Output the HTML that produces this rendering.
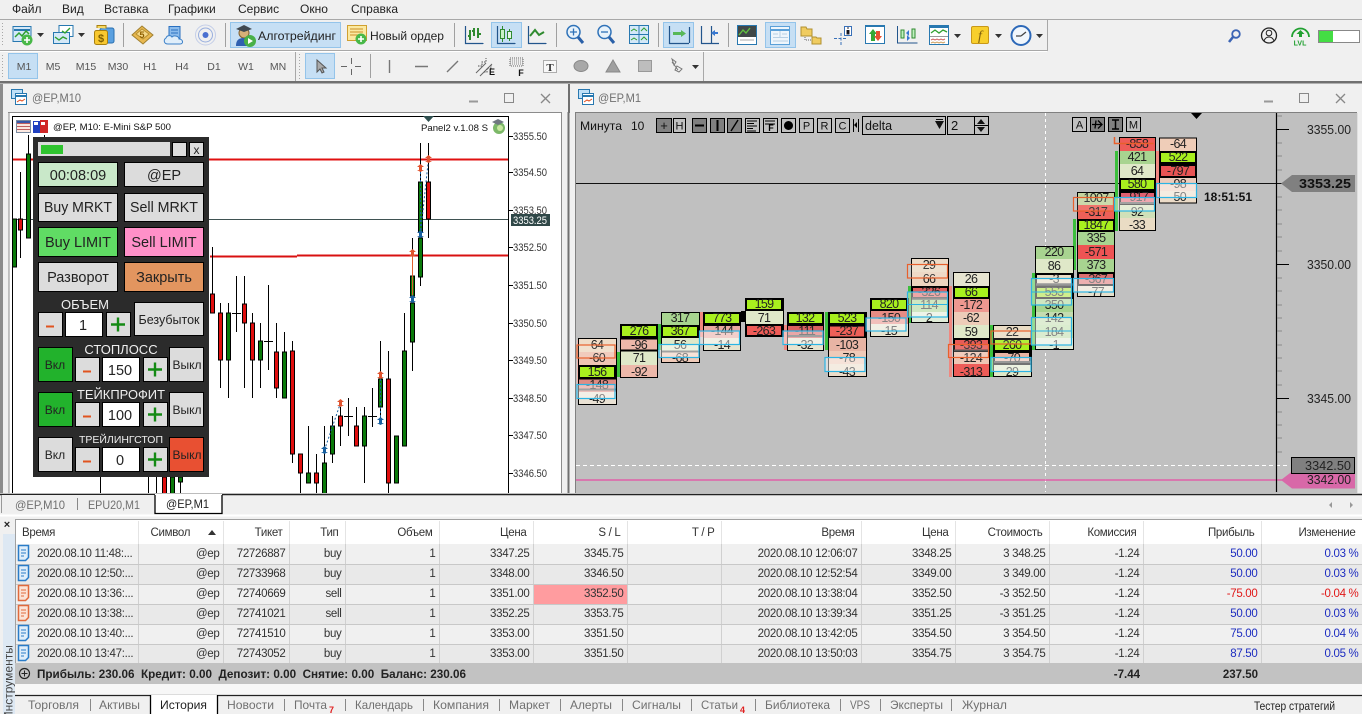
<!DOCTYPE html>
<html><head><meta charset="utf-8"><title>Terminal</title>
<style>
html,body{margin:0;padding:0;background:#f0f0f0;width:1362px;height:714px;overflow:hidden;font-family:"Liberation Sans",sans-serif}
svg{position:absolute;left:0;top:0}
svg text{font-family:"Liberation Sans",sans-serif}
.m{font-size:12px;fill:#222}
.tf{font-size:10.5px;fill:#555;text-anchor:middle}
.ax{font-size:11px;fill:#333}
.ax2{font-size:13px;fill:#222}
.b{fill:#dcdcdc;stroke:#000;stroke-width:1}
.bt{font-size:14.5px;fill:#222;text-anchor:middle}
.w{fill:#eee;text-anchor:middle}
.fp text{font-size:12.5px;fill:#222;text-anchor:middle;letter-spacing:-.7px}
.o{fill:none;stroke:#000;stroke-width:1}
.br{fill:#a8f01e;stroke:#000;stroke-width:2}
.bl{fill:rgba(255,255,255,.45);stroke:#2cb4e4;stroke-width:1.2}
.or{fill:rgba(255,255,255,.12);stroke:#e8602c;stroke-width:1.2}
.tb{fill:#c0c0c0;stroke:#000;stroke-width:1}
.tbd{fill:#808080;stroke:#000;stroke-width:1}
.tt{font-size:11px;fill:#111;text-anchor:middle}
.tab{font-size:12px;fill:#707070}
.sep{stroke:#a0a0a0;stroke-width:1}
table{position:absolute;left:16px;top:521px;border-collapse:collapse;table-layout:fixed;width:1346px;font-size:11.5px;letter-spacing:-.3px;color:#333}
td,th{height:20px;padding:0 3px 0 0;text-align:right;font-weight:normal;border-right:1px solid #d0d0d0;border-bottom:1px solid #c8c8c8;white-space:nowrap;overflow:hidden;box-sizing:border-box}
th{height:23px;border-right:1px solid #e4e4e4;border-bottom:0;padding-right:6px;background:#fff;color:#333;font-size:11.5px}
tr.a td{background:#e9e9e9}
td.t{text-align:left;padding-left:21px}
.bu{color:#1c2cc0}.re{color:#e01818}
</style></head><body>
<svg width="1362" height="714" viewBox="0 0 1362 714" xmlns="http://www.w3.org/2000/svg">
<!-- menu -->
<g class="m">
<text x="12" y="13" class="m">Файл</text><text x="62" y="13" class="m">Вид</text><text x="104" y="13" class="m">Вставка</text><text x="168" y="13" class="m">Графики</text><text x="238" y="13" class="m">Сервис</text><text x="300" y="13" class="m">Окно</text><text x="351" y="13" class="m">Справка</text>
</g>
<!-- toolbar lines -->
<path d="M0 19.5H1362" stroke="#a8a8a8"/><path d="M0 50.5H1047" stroke="#a8a8a8"/><path d="M0 51.5H1047" stroke="#fff"/><path d="M1047.5 19V51" stroke="#a8a8a8"/>
<path d="M2.5 23V47M2.5 55V78" stroke="#a8a8a8" stroke-dasharray="1 2"/>
<rect x="0" y="81" width="1362" height="2.5" fill="#707070"/>
<path d="M295.5 52V81" stroke="#a8a8a8"/><path d="M299.5 54V79" stroke="#a8a8a8" stroke-dasharray="1 2"/><path d="M703.5 52V81" stroke="#a8a8a8"/>
<path class="sep" d="M123.5 23V47M225.5 23V47M454.5 23V47M556.5 23V47M658.5 23V47M728.5 23V47M370.5 54V78"/>
<!-- toolbar buttons highlight -->
<g fill="#c6dff4" stroke="#94c4ea"><rect x="230.5" y="22.5" width="110" height="25"/><rect x="491.5" y="22.5" width="30" height="25"/><rect x="663.5" y="22.5" width="30" height="25"/><rect x="765.5" y="22.5" width="30" height="25"/><rect x="8.5" y="53.5" width="29" height="25"/><rect x="305.5" y="53.5" width="29" height="25"/></g>
<!-- icon: new chart -->
<rect x="13" y="26.5" width="18" height="15" fill="#d4e8f8" stroke="#2878b0"/><path d="M14 30h16" stroke="#2878b0" stroke-width="2"/><path d="M15 37l4-4 3 3 4-5 3 3" fill="none" stroke="#30a030" stroke-width="1.5"/><circle cx="27" cy="40" r="5.5" fill="#48b848"/><path d="M27 37v6M24 40h6" stroke="#fff" stroke-width="1.6"/>
<path d="M37 33h7l-3.5 4z" fill="#333"/>
<!-- icon: profiles -->
<rect x="59" y="25.5" width="14" height="11" fill="#fff" stroke="#2878b0"/><rect x="53.5" y="32.5" width="16" height="11" fill="#d4e8f8" stroke="#2878b0"/><path d="M62 31l3 2 5-5M55 37l4 3 4-3 4 2" fill="none" stroke="#30a030" stroke-width="1.4"/>
<path d="M78 33h7l-3.5 4z" fill="#333"/>
<!-- icon: dollar -->
<rect x="100" y="28" width="14" height="15" rx="2" fill="#5aa0e0" stroke="#2a70b0"/><rect x="94.5" y="30.5" width="13" height="14" rx="2" fill="#f8c830" stroke="#a88010"/><path d="M97 28v-2.500h9v3" fill="#f8d860" stroke="#a88010"/><text x="101" y="42" font-size="11" fill="#806000" text-anchor="middle" font-weight="bold">$</text>
<!-- book -->
<path d="M132 35l10-9 11 9-10 9z" fill="#e8b850" stroke="#a08030"/><path d="M136 34l6-5 7 5-6 5z" fill="#f4d888" stroke="#b89030"/><text x="142" y="38" font-size="9" fill="#906000" text-anchor="middle" font-weight="bold">5</text>
<!-- cloud -->
<rect x="169" y="26.500" width="11" height="12" fill="#8cbcec" stroke="#2a70c0"/><path d="M171 30h7M171 33h7" stroke="#2a70c0"/><path d="M168 44c-4 0-5-4-2-6 1-3 5-3 6-1 2-2 7-1 7 2 4 0 5 5 1 5z" fill="#e0eefa" stroke="#3c80c8"/>
<!-- signal -->
<circle cx="205.500" cy="35" r="10" fill="none" stroke="#c4cee8"/><circle cx="205.500" cy="35" r="7" fill="none" stroke="#98aede"/><circle cx="205.500" cy="35" r="3" fill="#4a70d0"/>
<!-- algo -->
<circle cx="244" cy="33" r="5" fill="#d8b078" stroke="#806030"/><path d="M236 29l8-4 8 4-8 3z" fill="#404850"/><path d="M236 46c0-7 4-8 8-8s8 2 8 8z" fill="#3060b0"/><circle cx="250" cy="41" r="6" fill="#48b048"/><path d="M248 38v6l5-3z" fill="#fff"/>
<text x="258" y="40" font-size="12" fill="#222" textLength="78" lengthAdjust="spacingAndGlyphs">Алготрейдинг</text>
<!-- new order -->
<rect x="347.500" y="25.500" width="19" height="15" fill="#fbe9a0" stroke="#d0a030"/><path d="M350 29h13M350 32h13M350 35h9" stroke="#c89028"/><circle cx="361" cy="39" r="5.500" fill="#48b848"/><path d="M361 36v6M358 39h6" stroke="#fff" stroke-width="1.600"/>
<text x="370" y="40" font-size="12" fill="#222" textLength="74" lengthAdjust="spacingAndGlyphs">Новый ордер</text>
<!-- bar chart -->
<g fill="none">
<path d="M465.500 26V43.500H483" stroke="#22558c" stroke-width="1.200"/><path d="M470 30v10M468 36h2M474 28v8M472 31h2M478 28v10M478 34h3" stroke="#2f8a2f" stroke-width="2"/>
<path d="M497.500 26V43.500H515" stroke="#22558c" stroke-width="1.200"/><rect x="500.500" y="29.500" width="4" height="9" fill="#c8f0c8" stroke="#2f8a2f"/><rect x="507.500" y="31.500" width="4" height="7" fill="#e4f4e4" stroke="#2f8a2f"/><path d="M502.500 26v3M502.500 39v3M509.500 29v2M509.500 39v2" stroke="#2f8a2f"/>
<path d="M528.500 26V43.500H546" stroke="#22558c" stroke-width="1.200"/><path d="M530 36l5-6 4 5 5-3" stroke="#2f8a2f" stroke-width="2"/>
</g>
<path d="M465.500 43.500h18M497.500 43.500h18M528.500 43.500h18" stroke="#22558c"/>
<!-- zoom -->
<g fill="none"><circle cx="573.500" cy="32" r="6.500" fill="#e8f2fa" stroke="#2f72b8" stroke-width="1.500"/><path d="M578 37l5 6" stroke="#2a60a8" stroke-width="3"/><path d="M570 32h7M573.500 28.500v7" stroke="#2f72b8" stroke-width="1.300"/>
<circle cx="604.500" cy="32" r="6.500" fill="#e8f2fa" stroke="#2f72b8" stroke-width="1.500"/><path d="M609 37l5 6" stroke="#2a60a8" stroke-width="3"/><path d="M601 32h7" stroke="#2f72b8" stroke-width="1.300"/></g>
<!-- tile -->
<rect x="629.500" y="25.500" width="19" height="18" fill="#d4e8f8" stroke="#2878b0"/><path d="M629 34.500h20M639 25v19" stroke="#2878b0"/><path d="M631 31l3-2 3 2M641 31l3-3 3 3M631 40l3-2 3 2M641 40l3-3 3 3" fill="none" stroke="#30a030"/>
<!-- shift -->
<path d="M669.500 26V43.500H689M689.500 27v16" fill="none" stroke="#22558c" stroke-width="1.200"/><path d="M673 32h8v-2l5 3.500-5 3.500v-2h-8z" fill="#58b858"/>
<path d="M701.500 26V43.500H719M711.500 26v18" fill="none" stroke="#22558c" stroke-width="1.200"/><path d="M718 32h-3v-2l-4 3 4 3v-2h3z" fill="#3878d0"/>
<!-- market watch -->
<rect x="737.500" y="25.500" width="19" height="19" fill="#fff" stroke="#2878b0"/><rect x="738" y="26" width="18" height="11" fill="#404848"/><path d="M739 35l4-5 3 3 4-5" fill="none" stroke="#60c040" stroke-width="1.400"/><path d="M740 40h14" stroke="#aaa"/>
<rect x="770.500" y="26.500" width="19" height="18" fill="#eef6fc" stroke="#5aa0d8"/><path d="M771 30h18" stroke="#5aa0d8" stroke-width="2"/><path d="M780 31v6M773 37.500h15M773 34h5M773 41h15M782 34h5" stroke="#b8d0e4"/>
<!-- folders -->
<path d="M801 27h5l1 2h5v7h-11z" fill="#f0cc60" stroke="#b09030"/><path d="M812 37h4l1 1h4v6h-9z" fill="#f0cc60" stroke="#b09030"/><path d="M805 37v3h6" stroke="#666" stroke-dasharray="1 1" fill="none"/>
<!-- crosshair info -->
<path d="M834 38.500h12M841 33v12" stroke="#3870b8" stroke-dasharray="3 1.500"/><rect x="844.500" y="26.500" width="7" height="9" fill="#fff" stroke="#3870b8"/><path d="M847 28h2M847 30v4h2v-4" stroke="#223"/>
<!-- up down -->
<rect x="865.500" y="25.500" width="19" height="18" fill="#fff" stroke="#2878b0"/><path d="M865 26h20" stroke="#2878b0" stroke-width="2"/><path d="M873 29l-4 5h2v7h4v-7h2z" fill="#36a836"/><path d="M878 41l4-5h-2v-5h-4v5h-2z" fill="#e85030"/>
<!-- candle arrows -->
<path d="M897.500 26V43h20" fill="none" stroke="#22558c"/><rect x="901" y="30" width="3" height="8" fill="#c0f0c0" stroke="#2f8a2f"/><rect x="912" y="29" width="3" height="9" fill="#c0f0c0" stroke="#2f8a2f"/><path d="M906 33l3-3v6zM910 38l-3-3v6z" fill="#3878d0"/>
<!-- indicators -->
<rect x="929.500" y="25.500" width="19" height="19" fill="#fff" stroke="#2878b0"/><path d="M929 27h20" stroke="#2878b0" stroke-width="2"/><path d="M931 33l4-3 4 3 4-3 4 2" fill="none" stroke="#30a030" stroke-width="1.300"/><path d="M930 36.500h18" stroke="#999"/><path d="M931 40l2-1 2 1 2-1 2 1 2-1 2 1 2-1" fill="none" stroke="#d06060"/><path d="M931 43l2-1 2 1 2-1 2 1 2-1 2 1 2-1" fill="none" stroke="#d0a060"/>
<path d="M954 34h7l-3.500 4z" fill="#333"/>
<rect x="971.500" y="26.500" width="17" height="17" rx="1.500" fill="#f8cf2c" stroke="#c89818"/><text x="980" y="40" font-size="14" font-style="italic" fill="#806010" text-anchor="middle" style="font-family:'Liberation Serif'">f</text>
<path d="M995 34h7l-3.500 4z" fill="#333"/>
<circle cx="1021" cy="35.500" r="9.500" fill="#f0f6fc" stroke="#2c68b8" stroke-width="2"/><path d="M1021 36l5-4M1021 36h-5" stroke="#444" stroke-width="1.300"/>
<path d="M1036 34h7l-3.500 4z" fill="#333"/>
<!-- right side -->
<circle cx="1236" cy="34" r="3.800" fill="none" stroke="#3c64b4" stroke-width="1.800"/><path d="M1233 37l-4 5" stroke="#3c64b4" stroke-width="2.600"/>
<circle cx="1269" cy="35.500" r="7.500" fill="none" stroke="#222" stroke-width="1.300"/><circle cx="1269" cy="33" r="2.800" fill="none" stroke="#222"/><path d="M1264 41c1-3 3-4 5-4s4 1 5 4" fill="none" stroke="#222"/>
<path d="M1292 37a8.500 8.500 0 0 1 17 0" fill="none" stroke="#20a030" stroke-width="1.800"/><path d="M1300.500 30l-4 4h2.500v3h3v-3h2.500z" fill="#20a030"/><text x="1300" y="45.500" font-size="7" font-weight="bold" fill="#20a030" text-anchor="middle">LVL</text>
<rect x="1318.500" y="30.500" width="41" height="12" fill="#fff" stroke="#888"/><rect x="1319" y="31" width="14" height="11" fill="#44dd44"/>
<!-- toolbar 2 -->
<g class="tf"><text x="24" y="70" class="tf">M1</text><text x="53" y="70" class="tf">M5</text><text x="86" y="70" class="tf">M15</text><text x="118" y="70" class="tf">M30</text><text x="150" y="70" class="tf">H1</text><text x="182" y="70" class="tf">H4</text><text x="214" y="70" class="tf">D1</text><text x="246" y="70" class="tf">W1</text><text x="278" y="70" class="tf">MN</text></g>
<path d="M317 60v12l3-3 2 4 2-1-2-4h4z" fill="#aaa" stroke="#555"/>
<path d="M341 66.500h6M355 66.500h6M351.500 58v6M351.500 69v6" stroke="#666"/>
<path d="M389.500 60v13M415 66.500h13M447 72l11-11" stroke="#777" stroke-width="1.400"/>
<path d="M476 73l10-10M480 76l12-12" stroke="#666"/><path d="M478 66h4v-4h4v-4M484 72h3v-4h4v-4" fill="none" stroke="#555" stroke-dasharray="1.500 1"/><text x="492" y="75" font-size="9" font-weight="bold" fill="#111" text-anchor="middle">E</text>
<rect x="510" y="58" width="13" height="8" fill="none" stroke="#666" stroke-dasharray="1 1"/><path d="M510 60h13M510 62h13M510 64h13" stroke="#888" stroke-dasharray="1 1"/><text x="521" y="76" font-size="9" font-weight="bold" fill="#111" text-anchor="middle">F</text>
<rect x="543.500" y="60.500" width="13" height="12" fill="#f8f8f8" stroke="#666" stroke-dasharray="1 1"/><text x="550" y="71" font-size="11" font-weight="bold" fill="#333" text-anchor="middle" style="font-family:'Liberation Serif'">T</text>
<ellipse cx="581" cy="66" rx="7" ry="5.500" fill="#a8a8a8" stroke="#888"/>
<path d="M613 60l7 12h-14z" fill="#a0a0a0" stroke="#888"/>
<rect x="638.500" y="60.500" width="13" height="11" fill="#bdbdbd" stroke="#999"/>
<path d="M672 59l4 3-2 3zM677 66l5 3-3 3-4-2zM672 62l6 8" fill="none" stroke="#777"/>
<path d="M692 65h7l-3.500 4z" fill="#333"/>
<!-- window titles -->
<g><rect x="11.500" y="89.500" width="11" height="9" fill="#bfe0f8" stroke="#2878b0"/><rect x="15.500" y="93.500" width="11" height="11" fill="#fff" stroke="#2878b0"/><path d="M16 96h10" stroke="#2878b0" stroke-width="2"/><path d="M17 102l3-2 2 1 3-2" fill="none" stroke="#e05020"/></g>
<text x="32" y="102" font-size="12" fill="#707070" textLength="49" lengthAdjust="spacingAndGlyphs">@EP,M10</text>
<path d="M469 101.500h9" stroke="#999" stroke-width="2"/><rect x="504.500" y="93.500" width="9" height="9" fill="none" stroke="#888"/><path d="M541 94l9 9M550 94l-9 9" stroke="#888" stroke-width="1.300"/>
<path d="M569 84V113" stroke="#707070" stroke-width="2"/>
<g transform="translate(567,0)"><rect x="11.500" y="89.500" width="11" height="9" fill="#bfe0f8" stroke="#2878b0"/><rect x="15.500" y="93.500" width="11" height="11" fill="#fff" stroke="#2878b0"/><path d="M16 96h10" stroke="#2878b0" stroke-width="2"/><path d="M17 102l3-2 2 1 3-2" fill="none" stroke="#e05020"/></g>
<text x="598" y="102" font-size="12" fill="#707070" textLength="43" lengthAdjust="spacingAndGlyphs">@EP,M1</text>
<path d="M1264 101.500h9" stroke="#999" stroke-width="2"/><rect x="1299.500" y="93.500" width="9" height="9" fill="none" stroke="#888"/><path d="M1336 94l9 9M1345 94l-9 9" stroke="#888" stroke-width="1.300"/>

<!-- LEFT CHART -->
<rect x="0" y="84" width="3" height="410" fill="#8c8c8c"/>
<rect x="9" y="113" width="553" height="380" fill="#fff"/>
<path d="M8 112.500H562M9 113V493M561.500 113V493" stroke="#8c8c8c"/>
<path d="M568.500 112V495" stroke="#707070" stroke-width="2"/>
<path d="M12.500 116V493M12 116.500H508.500M508.500 116V493" stroke="#000" fill="none"/>
<path d="M13 219.500H508" stroke="#3f5252"/>
<path d="M13 159.500H508" stroke="#e01010" stroke-width="2"/>
<path d="M210 256.500H297M297 255.500H508" stroke="#d81010" stroke-width="2"/>
<path fill="none" stroke="#000" d="M20.500 172V258M28.500 135V154M44.500 135V140M212.500 247V294M220.500 303V388M228.500 303V398M236.500 276V332M232 313.500h9M244.500 276V388M252.500 313V398M260.500 323V388M268.500 285V370M264 341.500h9M276.500 323V398M284.500 332V398M292.500 341V463M300.500 454V493M308.500 426V483M316.500 454V493M324.500 426V493M332.500 416V463M340.500 407V446M348.500 398V436M344 416.500h9M356.500 407V446M364.500 407V483M372.500 388V427M368 416.500h9M380.500 341V421M388.500 351V493M396.500 436V483M404.500 313V446M412.500 238V371M420.500 143V286M428.500 143V238M100.500 477V493M148.500 477V493M156.500 477V493M180.500 477V493"/>
<path fill="#0a7a0a" stroke="#000" d="M12.500 219h4v48h-4zM26.500 154h4v84h-4zM282.500 352h4v46h-4zM306.500 473h4v10h-4zM322.500 463h4v32h-4zM330.500 426h4v28h-4zM362.500 416h4v30h-4zM378.500 379h4v28h-4zM394.500 436h4v47h-4zM402.500 351h4v95h-4zM410.500 303h4v39h-4zM410.500 276h4v20h-4zM418.500 182h4v50h-4zM418.500 238h4v39h-4zM226.500 313h4v47h-4zM258.500 341h4v19h-4zM170.500 477h4v18h-4zM178.500 477h4v5h-4z"/>
<path fill="#e00e0e" stroke="#000" d="M18.500 219h4v11h-4zM210.500 294h4v19h-4zM218.500 313h4v47h-4zM242.500 304h4v19h-4zM250.500 323h4v37h-4zM274.500 352h4v36h-4zM290.500 351h4v103h-4zM298.500 454h4v19h-4zM314.500 473h4v10h-4zM338.500 416h4v10h-4zM354.500 426h4v20h-4zM386.500 379h4v104h-4zM426.500 182h4v37h-4zM162.500 477h4v18h-4z"/>
<path d="M324.500 450L340.500 403M380.500 421V375M420.500 234V168M420.500 234L428.500 159" stroke="#1860a0" stroke-dasharray="2 2" fill="none"/>
<path d="M412.500 299V253" stroke="#e06030"/>
<g fill="#1860a0"><path d="M324.500 446l3.500 3h-2v3h2l-3.500 2-3.500-2h2v-3h-2z"/><path d="M380.500 417l3.500 3h-2v3h2l-3.500 2-3.500-2h2v-3h-2z"/><path d="M412.500 295l3.500 3h-2v3h2l-3.500 2-3.500-2h2v-3h-2z"/><path d="M420.500 230l3.500 3h-2v3h2l-3.500 2-3.500-2h2v-3h-2z"/></g>
<g fill="#e0532e"><path d="M340.500 399l3.500 3h-2v3h2l-3.500 2-3.500-2h2v-3h-2z"/><path d="M380.500 371l3.500 3h-2v3h2l-3.500 2-3.500-2h2v-3h-2z"/><path d="M412.500 249l3.500 3h-2v3h2l-3.500 2-3.500-2h2v-3h-2z"/><path d="M420.500 164l3.500 3h-2v3h2l-3.500 2-3.500-2h2v-3h-2z"/><path d="M428.500 155l3.500 3h-2v3h2l-3.500 2-3.500-2h2v-3h-2z"/></g>
<rect x="16.500" y="120.500" width="14" height="12" fill="#fbe8e0" stroke="#7a8aa0"/><path d="M17 123.500h13M17 126.500h13M17 129.500h13" stroke="#c06060"/><path d="M17 122h13" stroke="#3858a8" stroke-width="2"/>
<rect x="33" y="121" width="7" height="12" fill="#2040c0"/><rect x="40" y="120" width="8" height="13" fill="#d02828"/><rect x="34" y="122" width="4" height="3" fill="#fff"/><rect x="41" y="122" width="4" height="3" fill="#fff"/>
<text x="53" y="130" font-size="9.500" fill="#111" textLength="118" lengthAdjust="spacingAndGlyphs">@EP, M10:  E-Mini S&amp;P 500</text>
<text x="421" y="131" font-size="9.500" fill="#111" textLength="67" lengthAdjust="spacingAndGlyphs">Panel2 v.1.08 S</text>
<path d="M423 116h11l-5.500 6z" fill="#2f4f4f"/>
<circle cx="499" cy="128" r="6" fill="#7cb868"/><path d="M492 122l6-3 6 3-6 3z" fill="#707880"/><circle cx="500" cy="128" r="3" fill="#c8e8a0"/>
<path d="M508 136.500h5M508 172.500h5M508 210.500h5M508 247.500h5M508 285.500h5M508 323.500h5M508 360.500h5M508 398.500h5M508 435.500h5M508 473.500h5" stroke="#000"/>
<g class="ax"><text x="513" y="140" textLength="34" lengthAdjust="spacingAndGlyphs" class="ax">3355.50</text><text x="513" y="176" textLength="34" lengthAdjust="spacingAndGlyphs" class="ax">3354.50</text><text x="513" y="214" textLength="34" lengthAdjust="spacingAndGlyphs" class="ax">3353.50</text><text x="513" y="251" textLength="34" lengthAdjust="spacingAndGlyphs" class="ax">3352.50</text><text x="513" y="289" textLength="34" lengthAdjust="spacingAndGlyphs" class="ax">3351.50</text><text x="513" y="327" textLength="34" lengthAdjust="spacingAndGlyphs" class="ax">3350.50</text><text x="513" y="364" textLength="34" lengthAdjust="spacingAndGlyphs" class="ax">3349.50</text><text x="513" y="402" textLength="34" lengthAdjust="spacingAndGlyphs" class="ax">3348.50</text><text x="513" y="439" textLength="34" lengthAdjust="spacingAndGlyphs" class="ax">3347.50</text><text x="513" y="477" textLength="34" lengthAdjust="spacingAndGlyphs" class="ax">3346.50</text></g>
<rect x="511" y="214" width="39" height="12" fill="#304848"/><text x="513" y="224" font-size="11" fill="#fff" textLength="34" lengthAdjust="spacingAndGlyphs">3353.25</text>

<!-- PANEL -->
<rect x="33" y="137" width="176" height="340" fill="#2b2b2b"/>
<rect x="38" y="142" width="132" height="14" fill="#dcdcdc"/><rect x="41" y="145" width="22" height="9" fill="#2fc42f"/>
<rect x="172.500" y="142.500" width="14" height="14" class="b"/><rect x="189.500" y="142.500" width="14" height="14" class="b"/><text x="196.500" y="154" font-size="12" fill="#222" text-anchor="middle">x</text>
<rect x="38.500" y="162.500" width="79" height="24" fill="#c9e8c9" stroke="#000"/><rect x="124.500" y="162.500" width="79" height="24" class="b"/>
<text x="78" y="180" class="bt">00:08:09</text><text x="164" y="180" class="bt">@EP</text>
<rect x="38.500" y="193.500" width="79" height="28" class="b"/><rect x="124.500" y="193.500" width="79" height="28" class="b"/>
<text x="78" y="212" class="bt" textLength="68" lengthAdjust="spacingAndGlyphs">Buy MRKT</text><text x="164" y="212" class="bt" textLength="68" lengthAdjust="spacingAndGlyphs">Sell MRKT</text>
<rect x="38.500" y="227.500" width="79" height="29" fill="#60dc64" stroke="#000"/><rect x="124.500" y="227.500" width="79" height="29" fill="#ff90c8" stroke="#000"/>
<text x="78" y="247" class="bt">Buy LIMIT</text><text x="164" y="247" class="bt">Sell LIMIT</text>
<rect x="38.500" y="262.500" width="79" height="29" class="b"/><rect x="124.500" y="262.500" width="79" height="29" fill="#e2955f" stroke="#000"/>
<text x="78" y="282" class="bt">Разворот</text><text x="164" y="282" class="bt">Закрыть</text>
<text x="85" y="309" font-size="13" class="w">ОБЪЕМ</text>
<rect x="134.500" y="302.500" width="69" height="33" class="b"/><text x="169" y="324" font-size="12.500" fill="#222" text-anchor="middle">Безубыток</text>
<rect x="38.500" y="312.500" width="24" height="24" class="b"/><rect x="65.500" y="312.500" width="37" height="24" fill="#fff" stroke="#000"/><rect x="106.500" y="312.500" width="24" height="24" class="b"/>
<text x="83" y="330" class="bt">1</text>
<path d="M46 326.500h8" stroke="#e0531f" stroke-width="2"/><path d="M111 324.500h14M118 317.500v14" stroke="#148a14" stroke-width="2.400"/>
<!-- row2 -->
<rect x="38.500" y="347.500" width="34" height="34" fill="#22b22c" stroke="#000"/><text x="55" y="369" font-size="12" fill="#222" text-anchor="middle">Вкл</text>
<text x="121" y="354" font-size="13" class="w">СТОПЛОСС</text>
<rect x="75.500" y="357.500" width="24" height="24" class="b"/><rect x="102.500" y="357.500" width="37" height="24" fill="#fff" stroke="#000"/><rect x="143.500" y="357.500" width="24" height="24" class="b"/>
<text x="120" y="375" class="bt">150</text><path d="M83 371.500h8" stroke="#e0531f" stroke-width="2"/><path d="M148 369.500h14M155 362.500v14" stroke="#148a14" stroke-width="2.400"/>
<rect x="169.500" y="347.500" width="34" height="34" class="b"/><text x="187" y="369" font-size="12" fill="#222" text-anchor="middle">Выкл</text>
<!-- row3 -->
<rect x="38.500" y="392.500" width="34" height="34" fill="#22b22c" stroke="#000"/><text x="55" y="414" font-size="12" fill="#222" text-anchor="middle">Вкл</text>
<text x="121" y="399" font-size="13" class="w" textLength="88" lengthAdjust="spacingAndGlyphs">ТЕЙКПРОФИТ</text>
<rect x="75.500" y="402.500" width="24" height="24" class="b"/><rect x="102.500" y="402.500" width="37" height="24" fill="#fff" stroke="#000"/><rect x="143.500" y="402.500" width="24" height="24" class="b"/>
<text x="120" y="420" class="bt">100</text><path d="M83 416.500h8" stroke="#e0531f" stroke-width="2"/><path d="M148 414.500h14M155 407.500v14" stroke="#148a14" stroke-width="2.400"/>
<rect x="169.500" y="392.500" width="34" height="34" class="b"/><text x="187" y="414" font-size="12" fill="#222" text-anchor="middle">Выкл</text>
<!-- row4 -->
<rect x="38.500" y="437.500" width="34" height="34" class="b"/><text x="55" y="459" font-size="12" fill="#222" text-anchor="middle">Вкл</text>
<text x="121" y="443" font-size="10.500" class="w" textLength="84" lengthAdjust="spacingAndGlyphs">ТРЕЙЛИНГСТОП</text>
<rect x="75.500" y="447.500" width="24" height="24" class="b"/><rect x="102.500" y="447.500" width="37" height="24" fill="#fff" stroke="#000"/><rect x="143.500" y="447.500" width="24" height="24" class="b"/>
<text x="120" y="465" class="bt">0</text><path d="M83 461.500h8" stroke="#e0531f" stroke-width="2"/><path d="M148 459.500h14M155 452.500v14" stroke="#148a14" stroke-width="2.400"/>
<rect x="169.500" y="437.500" width="34" height="34" fill="#e85032" stroke="#000"/><text x="187" y="459" font-size="12" fill="#222" text-anchor="middle">Выкл</text>

<!-- RIGHT CHART -->
<rect x="576" y="113" width="781" height="380" fill="#c0c0c0"/>
<path d="M575 112.500H1357M575.500 112V493" stroke="#808080"/>
<rect x="1357" y="113" width="1" height="380" fill="#e0e0e0"/>
<path d="M1045.500 113V492" stroke="#fff" stroke-dasharray="3 3"/>
<path d="M576 465.500H1290" stroke="#fff" stroke-dasharray="4 3"/>
<path d="M576 183.500H1284" stroke="#111"/>
<path d="M576 480H1284" stroke="#e060a8" stroke-width="1.500"/>
<path d="M1276.500 113V492" stroke="#000" stroke-width="1.200"/>
<path d="M1277 129.500h12M1277 264.500h12M1277 398.500h12" stroke="#000"/>
<path d="M1277 116h5M1277 143h5M1277 156h5M1277 170h5M1277 197h5M1277 210h5M1277 224h5M1277 237h5M1277 251h5M1277 278h5M1277 291h5M1277 305h5M1277 318h5M1277 331h5M1277 345h5M1277 358h5M1277 371h5M1277 385h5M1277 412h5M1277 425h5M1277 438h5M1277 452h5" stroke="#8a8a8a"/>
<text x="1307" y="134" class="ax2" textLength="44" lengthAdjust="spacingAndGlyphs">3355.00</text>
<text x="1307" y="269" class="ax2" textLength="44" lengthAdjust="spacingAndGlyphs">3350.00</text>
<text x="1307" y="403" class="ax2" textLength="44" lengthAdjust="spacingAndGlyphs">3345.00</text>
<path d="M1281 183.500l11-8.500h63v17h-63z" fill="#808080"/>
<text x="1299" y="188" font-size="12.500" font-weight="bold" fill="#111" textLength="52" lengthAdjust="spacingAndGlyphs">3353.25</text>
<path d="M1281 480l11-8.500h63v17h-63z" fill="#d868a8"/>
<text x="1307" y="484" class="ax2" textLength="44" lengthAdjust="spacingAndGlyphs">3342.00</text>
<rect x="1291.500" y="457.500" width="63" height="16" fill="#808080" stroke="#000"/>
<text x="1305" y="470" class="ax2" textLength="46" lengthAdjust="spacingAndGlyphs">3342.50</text>
<text x="1204" y="201" font-size="12" font-weight="bold" fill="#111" textLength="48" lengthAdjust="spacingAndGlyphs">18:51:51</text>

<!-- chart toolbar -->
<text x="580" y="130" font-size="12" fill="#111" textLength="42" lengthAdjust="spacingAndGlyphs">Минута</text><text x="631" y="130" font-size="12" fill="#111">10</text>
<rect x="656.500" y="118.500" width="15" height="14" class="tbd"/><text x="664" y="130" font-size="13" fill="#111" text-anchor="middle">+</text>
<rect x="673.500" y="118.500" width="12" height="14" class="tb"/><text x="679.500" y="129.500" class="tt">H</text>
<rect x="692.500" y="118.500" width="14" height="14" class="tbd"/><path d="M695 125.500h9" stroke="#000" stroke-width="2"/>
<rect x="710.500" y="118.500" width="14" height="14" class="tbd"/><path d="M717.500 120v11" stroke="#000" stroke-width="2"/>
<rect x="727.500" y="118.500" width="14" height="14" class="tbd"/><path d="M731 131l7-11" stroke="#000" stroke-width="1.400"/>
<rect x="745.500" y="118.500" width="14" height="14" class="tb"/><path d="M747 121h10M747 123.500h7M747 126h10M747 128.500h6M747 131h9" stroke="#000"/>
<rect x="763.500" y="118.500" width="14" height="14" class="tb"/><path d="M765 121h10M765 124h10" stroke="#000"/><text x="771" y="131" font-size="9" font-weight="bold" fill="#000" text-anchor="middle">F</text>
<rect x="781.500" y="118.500" width="14" height="14" class="tb"/><circle cx="788.500" cy="125.500" r="4.500" fill="#000"/>
<rect x="799.500" y="118.500" width="14" height="14" class="tb"/><text x="806.500" y="129.500" class="tt">P</text>
<rect x="817.500" y="118.500" width="14" height="14" class="tb"/><text x="824.500" y="129.500" class="tt">R</text>
<rect x="835.500" y="118.500" width="14" height="14" class="tb"/><text x="842.500" y="129.500" class="tt">C</text>
<path d="M853.500 119v13M858.500 119v13" stroke="#000"/><path d="M857 122l-3 3 3 3z" fill="#000"/>
<rect x="862.500" y="116.500" width="83" height="18" fill="none" stroke="#000"/><text x="865" y="130" font-size="12.500" fill="#111">delta</text><path d="M935 121h9l-4.500 8z" fill="#111"/><path d="M936 119.500h7" stroke="#111"/>
<rect x="947.500" y="116.500" width="41" height="18" fill="none" stroke="#000"/><text x="951" y="130" font-size="13" fill="#111">2</text><path d="M974.500 117v17M975 125.500h13" stroke="#000"/><path d="M981 119l-4 5h8zM981 132l-4-5h8z" fill="#111"/>
<rect x="1072.500" y="117.500" width="14" height="14" class="tb"/><text x="1079.500" y="128.500" class="tt">A</text>
<rect x="1090.500" y="117.500" width="14" height="14" class="tbd"/><path d="M1092 124.500h10M1098 120.500l4 4-4 4M1096 120.500l-1 8" stroke="#000" fill="none" stroke-width="1.300"/>
<rect x="1108.500" y="117.500" width="14" height="14" class="tbd"/><path d="M1112 120h7M1112 129h7M1115.500 120v9" stroke="#000" stroke-width="1.500"/>
<rect x="1126.500" y="117.500" width="14" height="14" class="tb"/><text x="1133.500" y="128.500" class="tt">M</text>
<path d="M1191 113h11l-5.500 6z" fill="#000"/>

<!-- FOOTPRINT -->
<g class="fp">
<!-- gutter bars -->
<rect x="577" y="340" width="2" height="60" fill="#efb4ac"/>
<rect x="617" y="352" width="3" height="25" fill="#3cbe3c"/>
<rect x="658" y="324" width="3" height="26" fill="#3cbe3c"/>
<rect x="700" y="312" width="3" height="25" fill="#f08880"/>
<rect x="784" y="325" width="3" height="25" fill="#f08880"/>
<rect x="825" y="312" width="3" height="38" fill="#3cbe3c"/>
<rect x="908" y="286" width="3" height="37" fill="#3cbe3c"/>
<rect x="949" y="286" width="3" height="91" fill="#f08880"/>
<rect x="990" y="325" width="3" height="52" fill="#3cbe3c"/>
<rect x="1032" y="273" width="3" height="77" fill="#3cbe3c"/>
<rect x="1073" y="219" width="3" height="51" fill="#3cbe3c"/>
<rect x="1115" y="151" width="3" height="80" fill="#3cbe3c"/>
<rect x="1156" y="151" width="3" height="46" fill="#f08880"/>
<!-- col1 -->
<rect x="578" y="338" width="38" height="14" fill="#efdcc8"/><rect x="578" y="352" width="38" height="13" fill="#efc4b4"/><rect x="579" y="366" width="36" height="12" class="br"/><rect x="578" y="379" width="38" height="13" fill="#dd8d85"/><rect x="578" y="392" width="38" height="13" fill="#eae2d4"/><path d="M578 378.500h38" stroke="#000" stroke-width="2"/><path d="M578 389.500h38" stroke="#555" stroke-width="2"/><rect x="578.500" y="338.500" width="38" height="66" class="o"/>
<text x="597" y="349">64</text><text x="597" y="362">-60</text><text x="597" y="376">156</text><text x="597" y="389">-148</text><text x="597" y="403">-49</text>
<rect x="577" y="345" width="38" height="13" class="or"/><rect x="577" y="384.500" width="38" height="14" class="bl"/>
<!-- col2 -->
<rect x="620" y="338" width="38" height="13" fill="#edb8aa"/><rect x="620" y="351" width="38" height="14" fill="#dfe8c8"/><rect x="620" y="365" width="38" height="13" fill="#edb8aa"/><rect x="621" y="325" width="36" height="12" class="br"/><path d="M620 338.500h38M620 350.500h38" stroke="#000" stroke-width="2"/><rect x="620.500" y="324.500" width="37" height="53" class="o"/>
<text x="639" y="335">276</text><text x="639" y="349">-96</text><text x="639" y="362">71</text><text x="639" y="376">-92</text>
<!-- col3 -->
<rect x="661" y="312" width="38" height="13" fill="#a8d490"/><rect x="662" y="326" width="36" height="11" class="br"/><rect x="661" y="338" width="38" height="13" fill="#dfe8c8"/><rect x="661" y="351" width="38" height="12" fill="#efcab8"/><path d="M661 351.500h38" stroke="#555" stroke-width="2"/><rect x="661.500" y="312.500" width="38" height="50" class="o"/>
<text x="680" y="322">317</text><text x="680" y="335">367</text><text x="680" y="349">56</text><text x="680" y="362">-68</text>
<rect x="659" y="344.500" width="40" height="13" class="bl"/>
<!-- col4 -->
<rect x="704" y="313" width="36" height="11" class="br"/><rect x="703" y="325" width="38" height="13" fill="#e8a8a0"/><rect x="703" y="338" width="38" height="13" fill="#e6e4d0"/><path d="M703 325h38" stroke="#000" stroke-width="2"/><rect x="703.500" y="312.500" width="37" height="38" class="o"/>
<text x="722" y="322">773</text><text x="722" y="335">-144</text><text x="722" y="349">-14</text>
<rect x="699.500" y="331" width="40" height="13.500" class="bl"/>
<!-- col5 -->
<rect x="746" y="299" width="36" height="11" class="br"/><rect x="745" y="311" width="38" height="13" fill="#dfe8c8"/><rect x="746" y="325" width="36" height="11" fill="#ee5c58" stroke="#000" stroke-width="2"/><rect x="745.500" y="298.500" width="38" height="38" class="o"/>
<rect x="741" y="311" width="4" height="11" fill="#000"/>
<text x="764" y="308">159</text><text x="764" y="322">71</text><text x="764" y="335">-263</text>
<!-- col6 -->
<rect x="788" y="313" width="35" height="11" class="br"/><rect x="787" y="325" width="37" height="13" fill="#d86060"/><rect x="787" y="338" width="37" height="13" fill="#e6e4d0"/><path d="M787 325h37" stroke="#000" stroke-width="2"/><path d="M787 336h37" stroke="#555" stroke-width="2"/><rect x="787.500" y="312.500" width="36" height="38" class="o"/>
<text x="805" y="322">132</text><text x="805" y="335">-111</text><text x="805" y="349">-32</text>
<rect x="783" y="331" width="40" height="13.500" class="bl"/>
<!-- col7 -->
<rect x="829" y="313" width="36" height="11" class="br"/><rect x="829" y="325.500" width="36" height="12" fill="#ee6058" stroke="#000" stroke-width="2"/><rect x="828" y="338" width="38" height="13" fill="#e8b4a4"/><rect x="828" y="351" width="38" height="13" fill="#efcab8"/><rect x="828" y="364" width="38" height="13" fill="#ecdcc8"/><rect x="828.500" y="312.500" width="38" height="64" class="o"/>
<text x="847" y="322">523</text><text x="847" y="335">-237</text><text x="847" y="349">-103</text><text x="847" y="362">-78</text><text x="847" y="376">-43</text>
<rect x="825" y="357.500" width="40" height="14" class="bl"/>
<!-- col8 -->
<rect x="871" y="299" width="36" height="11" class="br"/><rect x="870" y="311" width="38" height="13" fill="#e88c84"/><rect x="870" y="324" width="38" height="13" fill="#e6e4d0"/><rect x="870.500" y="298.500" width="38" height="38" class="o"/>
<text x="889" y="308">820</text><text x="889" y="322">-150</text><text x="889" y="335">-15</text>
<rect x="866" y="318" width="40" height="13" class="bl"/>
<!-- col9 -->
<rect x="911" y="258" width="38" height="14" fill="#ecdcc8"/><rect x="911" y="272" width="38" height="14" fill="#ecd4c0"/><rect x="912" y="287" width="36" height="11" fill="#e06060" stroke="#000" stroke-width="2"/><rect x="911" y="299" width="38" height="13" fill="#a8d490"/><rect x="911" y="312" width="38" height="11" fill="#e0ecd8"/><path d="M911 298.500h38" stroke="#444" stroke-width="2.500"/><rect x="911.500" y="258.500" width="37" height="64" class="o"/>
<text x="929" y="269">29</text><text x="929" y="283">66</text><text x="929" y="296">-326</text><text x="929" y="309">114</text><text x="929" y="322">2</text>
<rect x="907.500" y="264.500" width="40" height="13.500" class="or"/><rect x="907.500" y="292" width="40" height="25" class="bl"/><path d="M907.500 304.500h40" stroke="#2cb4e4"/>
<!-- col10 -->
<rect x="953" y="272" width="37" height="14" fill="#e6e4d0"/><rect x="954" y="287" width="35" height="11" class="br"/><rect x="953" y="299" width="37" height="13" fill="#ee9890"/><rect x="953" y="312" width="37" height="13" fill="#edccb8"/><rect x="953" y="325" width="37" height="13" fill="#dfe8c8"/><rect x="954" y="339" width="35" height="12" fill="#e85c58" stroke="#000" stroke-width="2"/><rect x="953" y="352" width="37" height="12" fill="#eec6b4"/><rect x="953" y="364" width="37" height="13" fill="#ee5c58"/><path d="M953 350.500h37" stroke="#444" stroke-width="2"/><rect x="953.500" y="272.500" width="36" height="104" class="o"/>
<text x="971" y="283">26</text><text x="971" y="296">66</text><text x="971" y="309">-172</text><text x="971" y="322">-62</text><text x="971" y="336">59</text><text x="971" y="349">-393</text><text x="971" y="362">-124</text><text x="971" y="376">-313</text>
<rect x="948.500" y="344.500" width="40" height="13" class="or"/>
<!-- col11 -->
<rect x="993" y="325" width="38" height="14" fill="#eadcc4"/><rect x="994" y="339" width="36" height="12" class="br"/><rect x="994" y="352" width="36" height="12" fill="#e8b4a4" stroke="#000" stroke-width="2"/><rect x="993" y="365" width="38" height="12" fill="#dfe8c8"/><path d="M993 362h38" stroke="#444" stroke-width="2"/><rect x="993.500" y="325.500" width="38" height="51" class="o"/>
<text x="1012" y="336">22</text><text x="1012" y="349">260</text><text x="1012" y="362">-70</text><text x="1012" y="376">29</text>
<rect x="991" y="331" width="40" height="13" class="or"/><rect x="991" y="357.500" width="40" height="14" class="bl"/>
<!-- col12 -->
<rect x="1035" y="246" width="38" height="13" fill="#a8d490"/><rect x="1035" y="259" width="38" height="14" fill="#dfe8c8"/><rect x="1036" y="274" width="36" height="12" fill="#eadcc4" stroke="#000" stroke-width="2"/><rect x="1036" y="287" width="36" height="11" class="br" style="fill:#a8e030"/><rect x="1035" y="299" width="38" height="13" fill="#a8d490"/><rect x="1035" y="312" width="38" height="13" fill="#c4dcb0"/><rect x="1035" y="325" width="38" height="13" fill="#bcdca8"/><rect x="1035" y="338" width="38" height="12" fill="#e0ecd8"/><path d="M1035 284.500h38" stroke="#444" stroke-width="2.500"/><rect x="1035.500" y="246.500" width="38" height="103" class="o"/>
<text x="1054" y="256">220</text><text x="1054" y="270">86</text><text x="1054" y="283">-3</text><text x="1054" y="296">553</text><text x="1054" y="309">350</text><text x="1054" y="322">142</text><text x="1054" y="336">184</text><text x="1054" y="349">-1</text>
<rect x="1031.500" y="278.500" width="40" height="26.500" class="bl"/><path d="M1031.500 292h40" stroke="#2cb4e4"/><rect x="1031.500" y="317.500" width="40" height="27.500" class="bl"/><path d="M1031.500 331h40" stroke="#2cb4e4"/>
<!-- col13 -->
<rect x="1077" y="192" width="38" height="13" fill="#c4d4a0"/><rect x="1077" y="205" width="38" height="14" fill="#ee6058"/><rect x="1078" y="220" width="36" height="11" class="br"/><rect x="1077" y="232" width="38" height="13" fill="#a8d490"/><rect x="1077" y="245" width="38" height="14" fill="#ee5454"/><rect x="1077" y="259" width="38" height="13" fill="#a8d490"/><rect x="1078" y="273" width="36" height="12" fill="#dc7070" stroke="#000" stroke-width="2"/><rect x="1077" y="286" width="38" height="11" fill="#e6e0cc"/><rect x="1077.500" y="192.500" width="37" height="104" class="o"/>
<text x="1096" y="202">1007</text><text x="1096" y="216">-317</text><text x="1096" y="229">1847</text><text x="1096" y="242">335</text><text x="1096" y="256">-571</text><text x="1096" y="269">373</text><text x="1096" y="283">-367</text><text x="1096" y="296">-77</text>
<rect x="1073.500" y="197.500" width="40" height="13.500" class="or"/><rect x="1073.500" y="278.500" width="40" height="13.500" class="bl"/>
<!-- col14 -->
<rect x="1119" y="138" width="37" height="13" fill="#ee5c58"/><rect x="1119" y="151" width="37" height="13" fill="#a8d490"/><rect x="1119" y="164" width="37" height="14" fill="#dfe8c8"/><rect x="1120" y="179" width="35" height="11" class="br"/><rect x="1120" y="192" width="35" height="12" fill="#e06070" stroke="#000" stroke-width="2"/><rect x="1119" y="205" width="37" height="13" fill="#cfe0b8"/><rect x="1119" y="218" width="37" height="13" fill="#eadcc4"/><path d="M1119 203h37" stroke="#555" stroke-width="2"/><rect x="1119.500" y="137.500" width="36" height="93" class="o"/>
<text x="1137" y="148">-858</text><text x="1137" y="161">421</text><text x="1137" y="175">64</text><text x="1137" y="188">580</text><text x="1137" y="201">-917</text><text x="1137" y="216">92</text><text x="1137" y="229">-33</text>
<path d="M1114.500 137v6.500h39" stroke="#e8602c" stroke-width="1.500" fill="none"/><rect x="1114.500" y="197.500" width="40" height="13.500" class="bl"/>
<!-- col15 -->
<rect x="1159" y="138" width="38" height="13" fill="#efcdb8"/><rect x="1160" y="152" width="36" height="11" class="br"/><rect x="1160" y="165" width="36" height="12" fill="#e85454" stroke="#000" stroke-width="2"/><rect x="1159" y="178" width="38" height="13" fill="#edccbc"/><rect x="1159" y="191" width="38" height="12" fill="#ecdcc8"/><rect x="1159.500" y="138" width="37" height="65" class="o"/>
<text x="1178" y="148">-64</text><text x="1178" y="161">522</text><text x="1178" y="175">-797</text><text x="1178" y="188">-98</text><text x="1178" y="201">-50</text>
<rect x="1156.500" y="183.500" width="40" height="14" class="bl"/>
</g>

<!-- MDI TABS -->
<rect x="0" y="493" width="1362" height="27" fill="#f0f0f0"/>
<path d="M0 494.500H1362" stroke="#222" stroke-width="1.500"/>
<rect x="1" y="495" width="154" height="18" fill="#efefef"/>
<path d="M1.500 495v18" stroke="#999"/>
<rect x="155" y="494" width="67" height="19" fill="#fff"/>
<path d="M155 495v18.500h67V495" fill="none" stroke="#000" stroke-width="1.300"/>
<path d="M0 515.500H1362" stroke="#fff" stroke-width="2"/>
<path d="M77.500 498v12" stroke="#888"/>
<text x="15" y="509" class="tab" textLength="50" lengthAdjust="spacingAndGlyphs">@EP,M10</text>
<text x="88" y="509" class="tab" textLength="52" lengthAdjust="spacingAndGlyphs">EPU20,M1</text>
<text x="166" y="508" font-size="12" fill="#222" textLength="43" lengthAdjust="spacingAndGlyphs">@EP,M1</text>
<path d="M1332 502v6l-3-3zM1350 502v6l3-3z" fill="#999"/>
<rect x="15" y="520" width="1347" height="1" fill="#fff"/>
<path d="M15 519.500H1362" stroke="#a0a0a0"/>
<path d="M15.500 519V663" stroke="#a0a0a0"/>
<!-- side strip -->
<rect x="0" y="517" width="15" height="197" fill="#f0f0f0"/>
<rect x="3" y="534" width="12" height="180" fill="#dde8f3"/>
<text x="7" y="528" font-size="11" font-weight="bold" fill="#222" text-anchor="middle">×</text>
<text transform="translate(12.500,720) rotate(-90)" font-size="12" fill="#444">Инструменты</text>
</svg>

<table>
<colgroup><col style="width:122px"><col style="width:85px"><col style="width:66px"><col style="width:56px"><col style="width:94px"><col style="width:94px"><col style="width:94px"><col style="width:94px"><col style="width:140px"><col style="width:94px"><col style="width:94px"><col style="width:94px"><col style="width:118px"><col style="width:101px"></colgroup>
<tr><th style="text-align:left;padding-left:6px">Время</th><th style="text-align:left;padding-left:12px">Символ</th><th>Тикет</th><th>Тип</th><th>Объем</th><th>Цена</th><th>S / L</th><th>T / P</th><th>Время</th><th>Цена</th><th>Стоимость</th><th>Комиссия</th><th>Прибыль</th><th>Изменение</th></tr>
<tr><td class="t">2020.08.10 11:48:...</td><td>@ep</td><td>72726887</td><td>buy</td><td>1</td><td>3347.25</td><td>3345.75</td><td></td><td>2020.08.10 12:06:07</td><td>3348.25</td><td>3 348.25</td><td>-1.24</td><td class="bu">50.00</td><td class="bu">0.03 %</td></tr>
<tr class="a"><td class="t">2020.08.10 12:50:...</td><td>@ep</td><td>72733968</td><td>buy</td><td>1</td><td>3348.00</td><td>3346.50</td><td></td><td>2020.08.10 12:52:54</td><td>3349.00</td><td>3 349.00</td><td>-1.24</td><td class="bu">50.00</td><td class="bu">0.03 %</td></tr>
<tr><td class="t">2020.08.10 13:36:...</td><td>@ep</td><td>72740669</td><td>sell</td><td>1</td><td>3351.00</td><td style="background:#ff9c9f">3352.50</td><td></td><td>2020.08.10 13:38:04</td><td>3352.50</td><td>-3 352.50</td><td>-1.24</td><td class="re">-75.00</td><td class="re">-0.04 %</td></tr>
<tr class="a"><td class="t">2020.08.10 13:38:...</td><td>@ep</td><td>72741021</td><td>sell</td><td>1</td><td>3352.25</td><td>3353.75</td><td></td><td>2020.08.10 13:39:34</td><td>3351.25</td><td>-3 351.25</td><td>-1.24</td><td class="bu">50.00</td><td class="bu">0.03 %</td></tr>
<tr><td class="t">2020.08.10 13:40:...</td><td>@ep</td><td>72741510</td><td>buy</td><td>1</td><td>3353.00</td><td>3351.50</td><td></td><td>2020.08.10 13:42:05</td><td>3354.50</td><td>3 354.50</td><td>-1.24</td><td class="bu">75.00</td><td class="bu">0.04 %</td></tr>
<tr class="a"><td class="t">2020.08.10 13:47:...</td><td>@ep</td><td>72743052</td><td>buy</td><td>1</td><td>3353.00</td><td>3351.50</td><td></td><td>2020.08.10 13:50:03</td><td>3354.75</td><td>3 354.75</td><td>-1.24</td><td class="bu">87.50</td><td class="bu">0.05 %</td></tr>
</table>

<svg width="1362" height="714" viewBox="0 0 1362 714" xmlns="http://www.w3.org/2000/svg">
<path d="M208 535l4-5 4 5z" fill="#333"/>
<!-- doc icons -->
<g fill="#e0eefa" stroke="#2a7cc8" stroke-width="1.500"><path d="M18.500 545.500h10v12l-3 3h-7z"/><path d="M18.500 565.500h10v12l-3 3h-7z"/><path d="M18.500 625.500h10v12l-3 3h-7z"/><path d="M18.500 645.500h10v12l-3 3h-7z"/></g>
<path d="M21 550h5M21 553h5M21 556h3M21 570h5M21 573h5M21 576h3M21 630h5M21 633h5M21 636h3M21 650h5M21 653h5M21 656h3" stroke="#2a7cc8"/>
<g fill="#fbe4d8" stroke="#e06a3c" stroke-width="1.500"><path d="M18.500 585.500h10v12l-3 3h-7z"/><path d="M18.500 605.500h10v12l-3 3h-7z"/></g>
<path d="M21 590h5M21 593h5M21 596h3M21 610h5M21 613h5M21 616h3" stroke="#e06a3c"/>
<!-- summary -->
<rect x="15" y="663" width="1347" height="21" fill="#c2c2c2"/>
<circle cx="24.500" cy="673.500" r="5" fill="none" stroke="#222" stroke-width="1.200"/><path d="M21.500 673.500h6M24.500 670.500v6" stroke="#222"/>
<text x="37" y="678" font-size="11.500" font-weight="bold" fill="#222" textLength="429" lengthAdjust="spacingAndGlyphs" xml:space="preserve">Прибыль: 230.06  Кредит: 0.00  Депозит: 0.00  Снятие: 0.00  Баланс: 230.06</text>
<text x="1140" y="678" font-size="11.500" font-weight="bold" fill="#222" text-anchor="end">-7.44</text>
<text x="1258" y="678" font-size="11.500" font-weight="bold" fill="#222" text-anchor="end">237.50</text>
<rect x="15" y="684" width="1347" height="11" fill="#f7f7f7"/>
<!-- bottom tabs -->
<rect x="15" y="695" width="1347" height="19" fill="#f0f0f0"/>
<path d="M15 695.500H1362" stroke="#222" stroke-width="1.300"/>
<rect x="150.500" y="695" width="67" height="19" fill="#fff"/>
<path d="M150.500 695v19M217.500 695v19" stroke="#000" stroke-width="1.300"/>
<path d="M90.500 699v12M284.500 699v12M345.500 699v12M423.500 699v12M499.500 699v12M560.500 699v12M622.500 699v12M691.500 699v12M755.500 699v12M840.500 699v12M880.500 699v12M951.500 699v12" stroke="#888"/>
<text x="28" y="709" class="tab" textLength="51" lengthAdjust="spacingAndGlyphs">Торговля</text>
<text x="99" y="709" class="tab" textLength="41" lengthAdjust="spacingAndGlyphs">Активы</text>
<text x="160" y="709" font-size="12" fill="#222" textLength="47" lengthAdjust="spacingAndGlyphs">История</text>
<text x="227" y="709" class="tab" textLength="47" lengthAdjust="spacingAndGlyphs">Новости</text>
<text x="294" y="709" class="tab" textLength="33" lengthAdjust="spacingAndGlyphs">Почта</text><text x="329" y="713" font-size="9" font-weight="bold" fill="#e02020">7</text>
<text x="355" y="709" class="tab" textLength="58" lengthAdjust="spacingAndGlyphs">Календарь</text>
<text x="433" y="709" class="tab" textLength="56" lengthAdjust="spacingAndGlyphs">Компания</text>
<text x="509" y="709" class="tab" textLength="41" lengthAdjust="spacingAndGlyphs">Маркет</text>
<text x="570" y="709" class="tab" textLength="42" lengthAdjust="spacingAndGlyphs">Алерты</text>
<text x="632" y="709" class="tab" textLength="49" lengthAdjust="spacingAndGlyphs">Сигналы</text>
<text x="701" y="709" class="tab" textLength="37" lengthAdjust="spacingAndGlyphs">Статьи</text><text x="740" y="713" font-size="9" font-weight="bold" fill="#e02020">4</text>
<text x="765" y="709" class="tab" textLength="65" lengthAdjust="spacingAndGlyphs">Библиотека</text>
<text x="850" y="709" class="tab" textLength="20" lengthAdjust="spacingAndGlyphs">VPS</text>
<text x="890" y="709" class="tab" textLength="53" lengthAdjust="spacingAndGlyphs">Эксперты</text>
<text x="962" y="709" class="tab" textLength="45" lengthAdjust="spacingAndGlyphs">Журнал</text>
<text x="1254" y="710" font-size="12" fill="#222" textLength="81" lengthAdjust="spacingAndGlyphs">Тестер стратегий</text>
</svg>
</body></html>
